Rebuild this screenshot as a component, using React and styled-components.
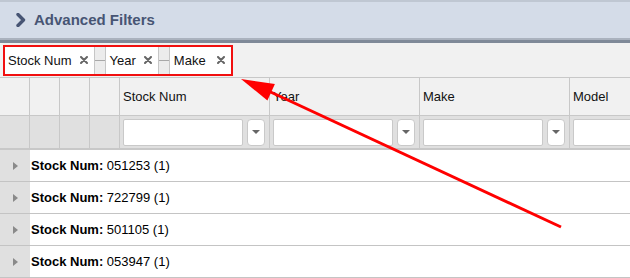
import React from 'react'
import styled, { createGlobalStyle } from 'styled-components'

const Global = createGlobalStyle`
  html, body {
    margin: 0;
    padding: 0;
    background: #fff;
  }
  body {
    font-family: "Liberation Sans", Arial, Helvetica, sans-serif;
    font-size: 13px;
    color: #000;
  }
`

const Page = styled.div`
  position: relative;
  width: 630px;
  height: 278px;
  overflow: hidden;
  display: flex;
  flex-direction: column;
`

const TitleBar = styled.div`
  height: 36px;
  border-top: 2px solid #bfc7d2;
  border-bottom: 2px solid #aab2be;
  box-shadow: 0 3px 0 #7f8998;
  margin-bottom: 3px;
  background: #d4dce8;
  display: flex;
  align-items: center;
  gap: 8px;
  padding-left: 16px;
  color: #475574;
  font-weight: bold;
  font-size: 15px;
`

const Toolbar = styled.div`
  height: 34px;
  background: #f1f1f1;
  box-sizing: border-box;
  padding: 2px 0 0 3px;
`

const FilterBox = styled.div`
  display: inline-flex;
  height: 31px;
  box-sizing: border-box;
  border: 2px solid #f10f0f;
`

const Chip = styled.div`
  display: flex;
  align-items: center;
  gap: ${p => p.$gap || 8}px;
  padding: 0 6px 0 ${p => p.$pl || 4}px;
  background: #fff;
  color: #111;
  font-size: 13px;
`

const Connector = styled.div`
  width: 10px;
  border-left: 1px solid #c6c6c6;
  border-right: 1px solid #c6c6c6;
  background: #ececec;
  display: flex;
  align-items: center;
  &::after {
    content: '';
    display: block;
    width: 100%;
    height: 1px;
    background: #a8a8a8;
  }
`

const GridRow = styled.div`
  display: grid;
  grid-template-columns: 30px 30px 30px 30px 150px 150px 150px 150px;
  box-sizing: border-box;
  height: ${p => p.$h}px;
  background: ${p => p.$bg};
  border-top: 1px solid #c8c8c8;
  border-bottom: ${p => p.$bb || 0}px solid #c8c8c8;
`

const HeadCell = styled.div`
  border-right: 1px solid #c8c8c8;
  display: flex;
  align-items: center;
  padding-left: 3px;
  font-size: 13px;
  color: #111;
`

const FilterCell = styled.div`
  border-right: 1px solid #c8c8c8;
  display: flex;
  align-items: center;
  gap: 4px;
  padding-left: 3px;
`

const TextInput = styled.div`
  width: 120px;
  height: 27px;
  box-sizing: border-box;
  background: #fff;
  border: 1px solid #c9c9c9;
  border-radius: 2px;
`

const DropButton = styled.div`
  width: 18px;
  height: 27px;
  box-sizing: border-box;
  background: #fff;
  border: 1px solid #c9c9c9;
  border-radius: 4px;
  display: flex;
  align-items: center;
  justify-content: center;
  &::after {
    content: '';
    border-left: 4px solid transparent;
    border-right: 4px solid transparent;
    border-top: 4px solid #666;
  }
`

const GroupRow = styled.div`
  display: grid;
  grid-template-columns: 30px 1fr;
  height: 32px;
  box-sizing: border-box;
  border-bottom: 1px solid #c4c4c4;
`

const Gutter = styled.div`
  background: #e0e0e0;
  display: flex;
  align-items: center;
  padding-left: 13px;
  &::after {
    content: '';
    border-top: 4px solid transparent;
    border-bottom: 4px solid transparent;
    border-left: 5px solid #8a8a8a;
  }
`

const GroupLabel = styled.div`
  display: flex;
  align-items: center;
  padding-left: 1px;
  font-size: 13px;
  color: #000;
  span {
    white-space: pre;
  }
  b {
    font-weight: bold;
  }
`

const Overlay = styled.svg`
  position: absolute;
  left: 0;
  top: 0;
  pointer-events: none;
`

const Chevron = () => (
  <svg width="10" height="14" viewBox="0 0 10 14">
    <polyline points="2,1.5 7.5,7 2,12.5" fill="none" stroke="#475574" strokeWidth="3.4" strokeLinejoin="round" strokeLinecap="round" />
  </svg>
)

const Close = () => (
  <svg width="8" height="8" viewBox="0 0 8 8">
    <path d="M1 1L7 7M7 1L1 7" stroke="#666" strokeWidth="2" strokeLinecap="round" />
  </svg>
)

const chips = [
  { label: 'Stock Num', pl: 3 },
  { label: 'Year' },
  { label: 'Make', gap: 11 },
]

const columns = ['Stock Num', 'Year', 'Make', 'Model']
const groups = ['051253', '722799', '501105', '053947']

export default function App() {
  return (
    <Page>
      <Global />
      <TitleBar>
        <Chevron />
        Advanced Filters
      </TitleBar>
      <Toolbar>
        <FilterBox>
          {chips.map((c, i) => (
            <React.Fragment key={c.label}>
              {i > 0 && <Connector />}
              <Chip $pl={c.pl} $gap={c.gap}>
                {c.label}
                <Close />
              </Chip>
            </React.Fragment>
          ))}
        </FilterBox>
      </Toolbar>
      <GridRow $h={38} $bg="#f1f1f1">
        <HeadCell />
        <HeadCell />
        <HeadCell />
        <HeadCell />
        {columns.map(c => <HeadCell key={c}>{c}</HeadCell>)}
      </GridRow>
      <GridRow $h={36} $bg="#e0e0e0" $bb={2}>
        <FilterCell />
        <FilterCell />
        <FilterCell />
        <FilterCell />
        {columns.map(c => (
          <FilterCell key={c}>
            <TextInput />
            <DropButton />
          </FilterCell>
        ))}
      </GridRow>
      {groups.map(g => (
        <GroupRow key={g}>
          <Gutter />
          <GroupLabel>
            <span><b>Stock Num:</b>{` ${g} (1)`}</span>
          </GroupLabel>
        </GroupRow>
      ))}
      <Overlay width="630" height="278">
        <line x1="561" y1="227" x2="262" y2="88" stroke="#f00" strokeWidth="3" />
        <polygon points="241,79 267.4,100.5 274.9,84.1" fill="#f00" />
      </Overlay>
    </Page>
  )
}
